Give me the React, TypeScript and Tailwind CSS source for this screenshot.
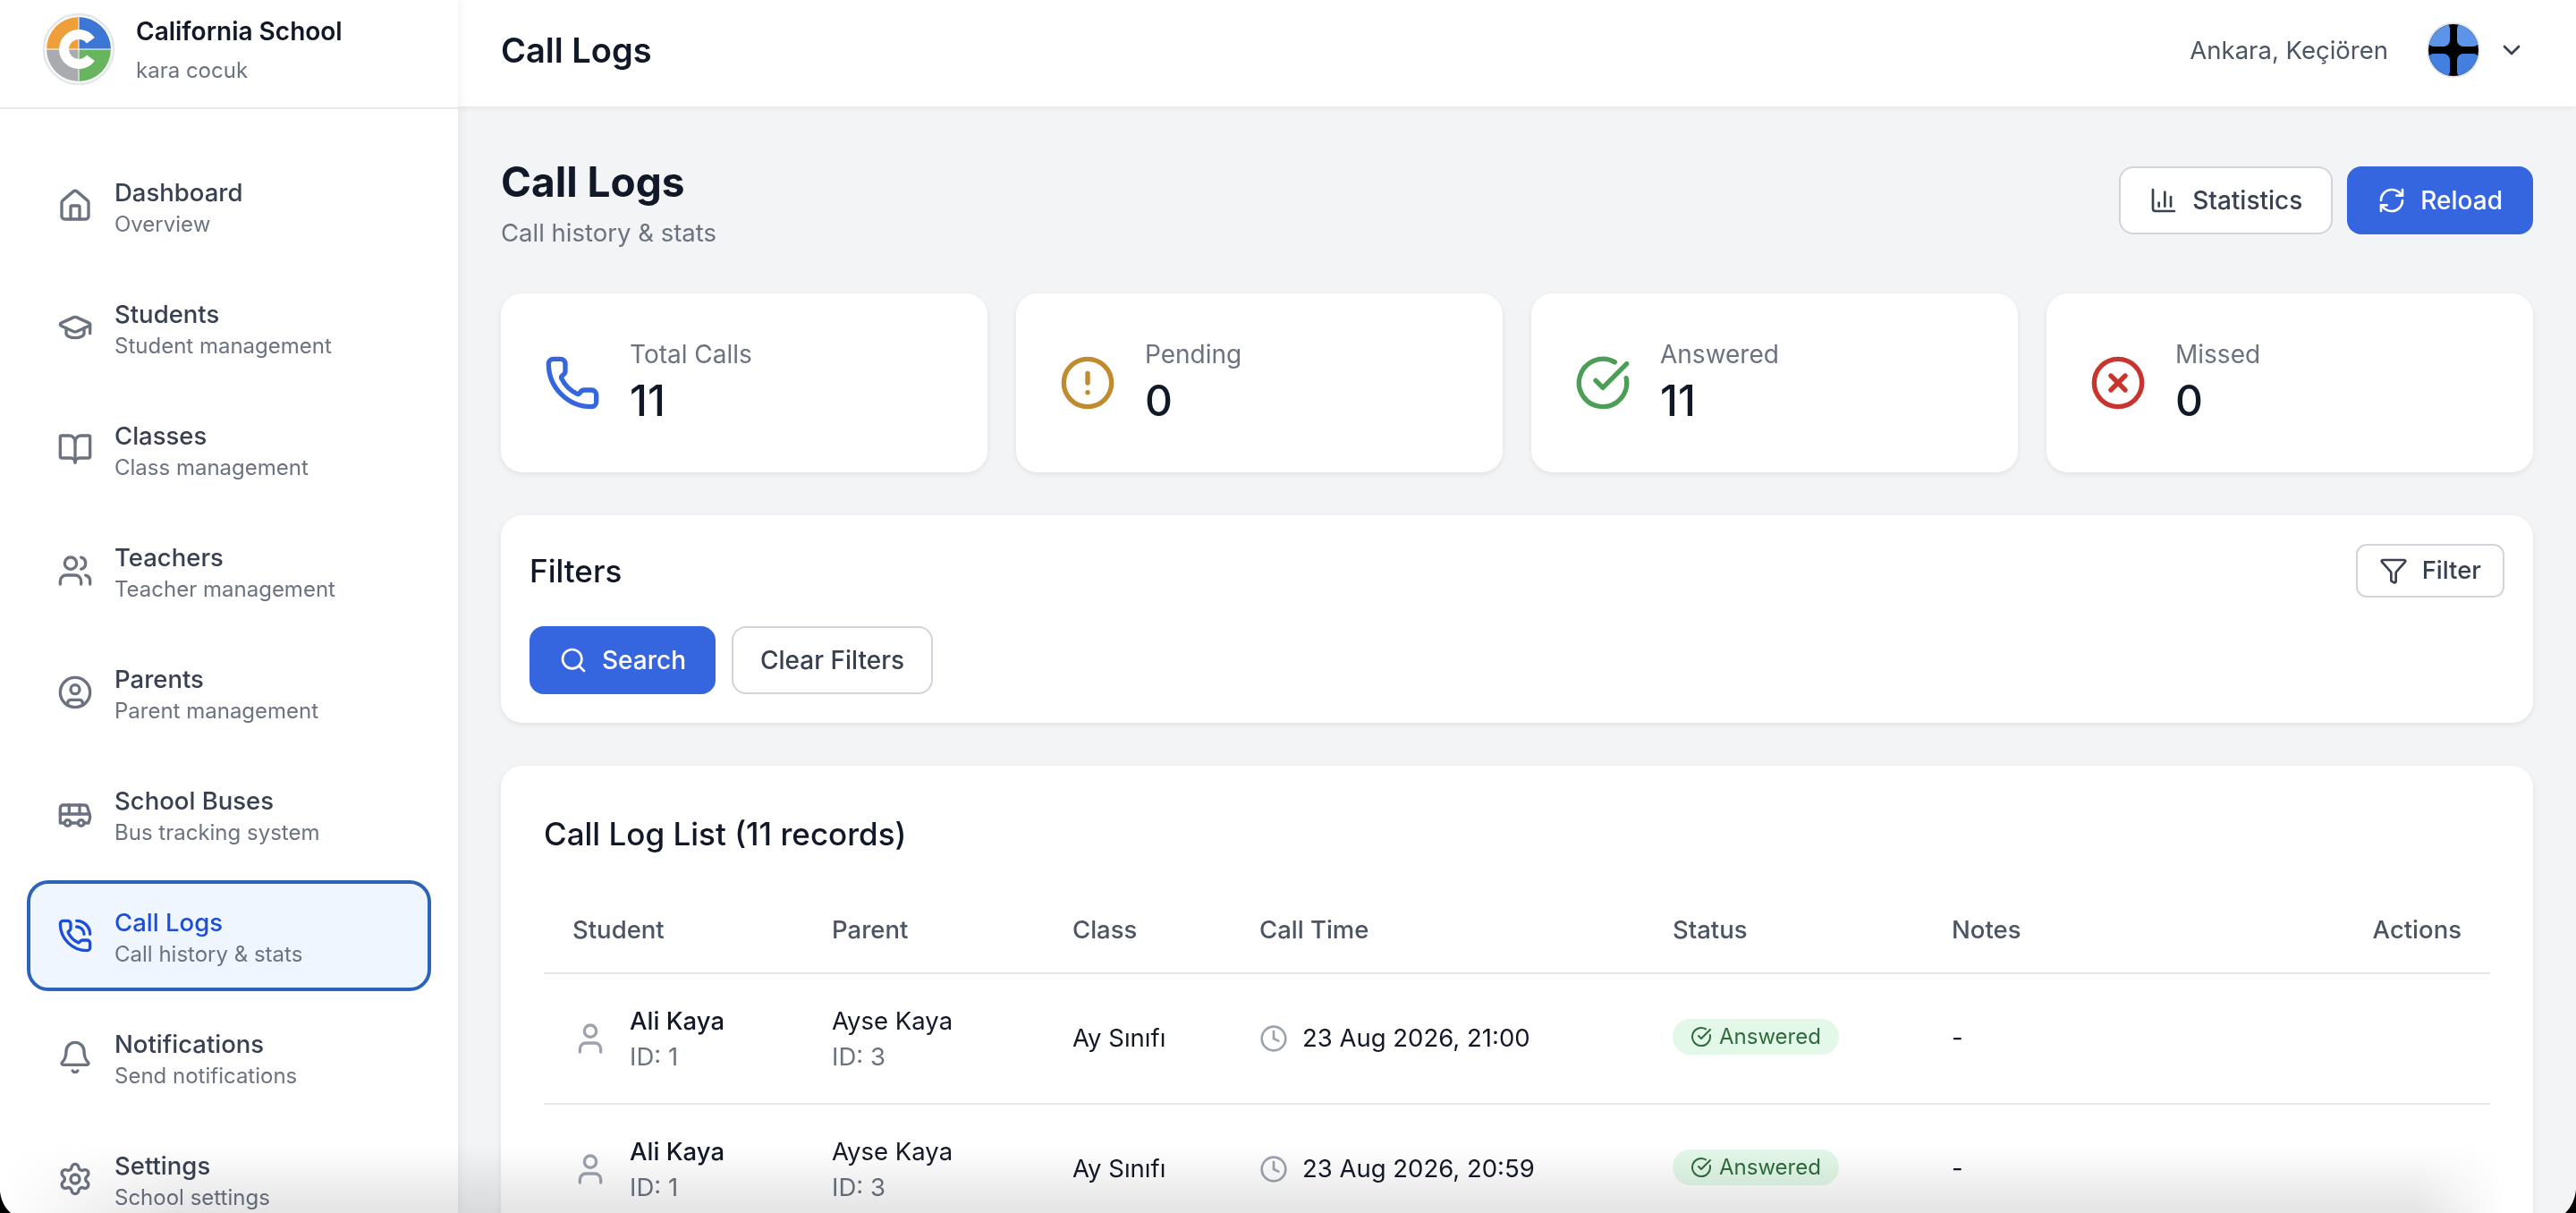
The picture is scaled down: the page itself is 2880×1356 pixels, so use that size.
import {
  House, GraduationCap, BookOpen, Users, CircleUser, Bus, PhoneCall, Bell, Settings,
  ChevronDown, ChartColumn, RefreshCw, Phone, CircleAlert, CircleCheckBig, CircleX,
  Funnel, Search, User, Clock,
} from "lucide-react";

const NAV = [
  { label: "Dashboard", sub: "Overview", icon: House },
  { label: "Students", sub: "Student management", icon: GraduationCap },
  { label: "Classes", sub: "Class management", icon: BookOpen },
  { label: "Teachers", sub: "Teacher management", icon: Users },
  { label: "Parents", sub: "Parent management", icon: CircleUser },
  { label: "School Buses", sub: "Bus tracking system", icon: Bus },
  { label: "Call Logs", sub: "Call history & stats", icon: PhoneCall, active: true },
  { label: "Notifications", sub: "Send notifications", icon: Bell },
  { label: "Settings", sub: "School settings", icon: Settings },
];

const STATS = [
  { label: "Total Calls", value: "11", icon: Phone, color: "text-[#3566dc]" },
  { label: "Pending", value: "0", icon: CircleAlert, color: "text-[#c08a2e]" },
  { label: "Answered", value: "11", icon: CircleCheckBig, color: "text-[#4a9e55]" },
  { label: "Missed", value: "0", icon: CircleX, color: "text-[#c8352e]" },
];

const ROWS = [
  { student: "Ali Kaya", sid: "ID: 1", parent: "Ayse Kaya", pid: "ID: 3", cls: "Ay Sınıfı", time: "23 Aug 2026, 21:00" },
  { student: "Ali Kaya", sid: "ID: 1", parent: "Ayse Kaya", pid: "ID: 3", cls: "Ay Sınıfı", time: "23 Aug 2026, 20:59" },
];

function SchoolLogo() {
  return (
    <svg width="80" height="80" viewBox="0 0 80 80" className="shrink-0">
      <circle cx="40" cy="40" r="39" fill="#fff" stroke="#e5e7eb" strokeWidth="2.5" />
      <path d="M40 40V4A36 36 0 0 0 4 40Z" fill="#ee9f3a" />
      <path d="M40 40V4A36 36 0 0 1 76 40Z" fill="#3d77d6" />
      <path d="M40 40H76A36 36 0 0 1 40 76Z" fill="#69b45e" />
      <path d="M40 40V76A36 36 0 0 1 4 40Z" fill="#a9abae" />
      <path d="M4 40H76M40 4V76" stroke="#fff" strokeWidth="1" />
      <path d="M53.4 30.3A16.5 16.5 0 1 0 53.4 49.7" fill="none" stroke="#fff" strokeWidth="11" />
    </svg>
  );
}

function Avatar() {
  return (
    <svg width="62" height="64" viewBox="0 0 62 64" className="shrink-0">
      <defs>
        <clipPath id="av">
          <ellipse cx="31" cy="32" rx="28" ry="29" />
        </clipPath>
      </defs>
      <ellipse cx="31" cy="32" rx="30" ry="31" fill="#e5e7eb" />
      <g clipPath="url(#av)">
        <rect width="62" height="64" fill="#000" />
        <rect x="2" y="1" width="25" height="27" rx="7" fill="#5c94ea" />
        <rect x="35" y="1" width="25" height="27" rx="7" fill="#5c94ea" />
        <rect x="2" y="36" width="25" height="27" rx="7" fill="#437fde" />
        <rect x="35" y="36" width="25" height="27" rx="7" fill="#437fde" />
      </g>
    </svg>
  );
}

export default function App() {
  return (
    <div className="relative flex h-screen overflow-hidden bg-[#f3f4f6] font-['Inter',sans-serif]">
      {/* Sidebar */}
      <aside className="z-20 w-[512px] shrink-0 overflow-hidden bg-white shadow-[2px_0_12px_rgba(0,0,0,0.06)]">
        <div className="flex h-[122px] items-center gap-[24px] border-b-2 border-[#e5e7eb] pb-[10px] pl-[48px]">
          <SchoolLogo />
          <div>
            <p className="text-[28px] leading-[40px] font-semibold text-[#111827]">California School</p>
            <p className="mt-[8px] text-[24px] leading-[32px] text-[#6b7280]">kara cocuk</p>
          </div>
        </div>
        <nav className="flex flex-col gap-4 px-8 pt-[48px]">
          {NAV.map((n) => (
            <div
              key={n.label}
              className={`flex h-[120px] shrink-0 items-center gap-6 rounded-[22px] ${
                n.active ? "border-2 border-[#2d63b8] bg-[#eff6ff] pl-[30px] ring-2 ring-[#2d63b8]" : "pl-8"
              }`}
            >
              <n.icon size={40} className={n.active ? "text-[#1d4ed8]" : "text-[#6b7280]"} />
              <div className="pt-1">
                <p className={`text-[27.5px] leading-[38px] font-medium ${n.active ? "text-[#1d4ed8]" : "text-[#374151]"}`}>
                  {n.label}
                </p>
                <p className="text-[24px] leading-[34px] text-[#6b7280]">{n.sub}</p>
              </div>
            </div>
          ))}
        </nav>
      </aside>

      {/* Main */}
      <div className="flex min-w-0 flex-1 flex-col">
        <header className="z-10 flex h-[119px] shrink-0 items-center justify-between bg-white pr-[48px] pb-2 pl-[48px] shadow-[0_2px_6px_rgba(0,0,0,0.06)]">
          <h2 className="text-[38px] leading-[56px] font-semibold text-[#111827]">Call Logs</h2>
          <div className="flex items-center">
            <span className="text-[27.5px] leading-[40px] text-[#4b5563]">Ankara, Keçiören</span>
            <div className="mr-2 ml-[42px] flex items-center gap-[18px]">
              <Avatar />
              <ChevronDown size={32} className="text-[#374151]" />
            </div>
          </div>
        </header>

        <main className="flex-1 overflow-hidden px-[48px] pt-[49px]">
          <div className="flex items-center justify-between">
            <div>
              <h1 className="text-[46px] leading-[70px] font-bold text-[#111827]">Call Logs</h1>
              <p className="pt-[2px] text-[27.5px] leading-[40px] text-[#6b7280]">Call history &amp; stats</p>
            </div>
            <div className="flex gap-4">
              <button className="flex h-[76px] items-center gap-4 rounded-2xl border-2 border-[#d1d5db] bg-white px-8 text-[28px] font-medium text-[#374151]">
                <ChartColumn size={32} />
                Statistics
              </button>
              <button className="flex h-[76px] items-center gap-4 rounded-2xl bg-[#3566e0] px-[34px] text-[28px] font-medium text-white">
                <RefreshCw size={32} />
                Reload
              </button>
            </div>
          </div>

          <div className="mt-[48px] grid grid-cols-4 gap-8">
            {STATS.map((s) => (
              <div key={s.label} className="flex h-[200px] items-center gap-8 rounded-3xl bg-white pl-[48px] shadow-[0_2px_6px_rgba(0,0,0,0.08)]">
                <s.icon size={64} className={s.color} />
                <div>
                  <p className="text-[28px] leading-[40px] text-[#6b7280]">{s.label}</p>
                  <p className="text-[48px] leading-[64px] font-medium text-[#111827]">{s.value}</p>
                </div>
              </div>
            ))}
          </div>

          <section className="mt-[48px] rounded-3xl bg-white p-8 shadow-[0_2px_6px_rgba(0,0,0,0.08)]">
            <div className="flex h-[60px] items-center justify-between">
              <h3 className="text-[35px] font-medium text-[#111827]">Filters</h3>
              <button className="flex h-[60px] items-center gap-4 rounded-xl border-2 border-[#d1d5db] bg-white px-[24px] text-[27.5px] font-medium text-[#374151]">
                <Funnel size={32} />
                Filter
              </button>
            </div>
            <div className="mt-8 flex gap-[18px]">
              <button className="flex h-[76px] items-center gap-4 rounded-2xl bg-[#3566e0] px-[33px] text-[28px] font-medium text-white">
                <Search size={32} />
                Search
              </button>
              <button className="flex h-[76px] items-center rounded-2xl border-2 border-[#d1d5db] bg-white px-[30px] text-[28px] font-medium text-[#374151]">
                Clear Filters
              </button>
            </div>
          </section>

          <section className="mt-[48px] rounded-3xl bg-white p-[48px] shadow-[0_2px_6px_rgba(0,0,0,0.08)]">
            <h3 className="text-[35px] leading-[56px] font-medium text-[#111827]">Call Log List (11 records)</h3>
            <table className="mt-8 w-full table-fixed border-collapse text-left">
              <thead>
                <tr className="h-[96px] border-b-2 border-[#e5e7eb] text-[27.5px] text-[#4b5563]">
                  <th className="w-[290px] pl-8 font-medium">Student</th>
                  <th className="w-[269px] pl-8 font-medium">Parent</th>
                  <th className="w-[209px] pl-8 font-medium">Class</th>
                  <th className="w-[462px] pl-8 font-medium">Call Time</th>
                  <th className="w-[312px] pl-8 font-medium">Status</th>
                  <th className="pl-8 font-medium">Notes</th>
                  <th className="w-[200px] pr-8 text-right font-medium">Actions</th>
                </tr>
              </thead>
              <tbody>
                {ROWS.map((r, i) => (
                  <tr key={i} className="h-[146px] border-b-2 border-[#e5e7eb] text-[27.5px] text-[#111827]">
                    <td className="pl-8">
                      <div className="flex items-center gap-6">
                        <User size={40} className="shrink-0 text-[#9ca3af]" />
                        <div>
                          <p className="leading-[40px] font-medium">{r.student}</p>
                          <p className="leading-[40px] text-[#6b7280]">{r.sid}</p>
                        </div>
                      </div>
                    </td>
                    <td className="pl-8">
                      <p className="leading-[40px]">{r.parent}</p>
                      <p className="leading-[40px] text-[#6b7280]">{r.pid}</p>
                    </td>
                    <td className="pl-8">{r.cls}</td>
                    <td className="pl-8">
                      <div className="flex items-center gap-4">
                        <Clock size={32} className="text-[#9ca3af]" />
                        {r.time}
                      </div>
                    </td>
                    <td className="pl-8">
                      <span className="inline-flex h-[40px] items-center gap-2 rounded-full bg-[#e3f8e9] px-5 text-[24px] text-[#2f6b3e]">
                        <CircleCheckBig size={24} />
                        Answered
                      </span>
                    </td>
                    <td className="pl-8">-</td>
                    <td />
                  </tr>
                ))}
              </tbody>
            </table>
          </section>
        </main>
      </div>

      {/* Bottom edge of the captured window */}
      <div className="pointer-events-none absolute inset-x-0 bottom-0 z-30 h-[76px] bg-gradient-to-t from-[#e4e4e4] to-transparent mix-blend-multiply [mask-image:linear-gradient(to_right,transparent,black_200px,black_calc(100%-180px),transparent_calc(100%-80px))]" />
      <svg width="12" height="24" viewBox="0 0 12 24" className="pointer-events-none absolute bottom-0 left-0 z-40">
        <path d="M0 0C1 9 5 18 12 24H0Z" fill="#000" />
      </svg>
      <svg width="12" height="26" viewBox="0 0 12 26" className="pointer-events-none absolute right-0 bottom-0 z-40">
        <path d="M12 0C11 10 7 19 0 26H12Z" fill="#000" />
      </svg>
    </div>
  );
}
